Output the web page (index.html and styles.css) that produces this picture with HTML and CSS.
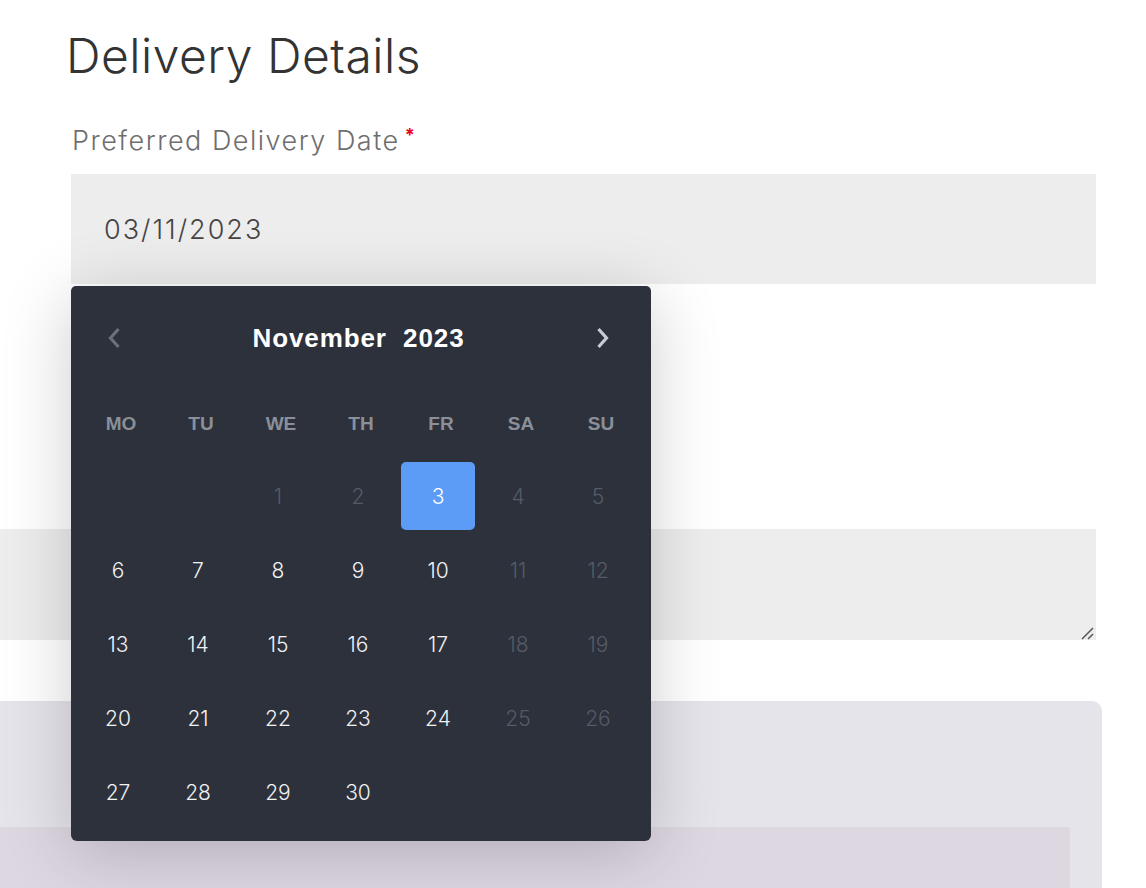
FILE: index.html
```html
<!DOCTYPE html>
<html>
<head>
<meta charset="utf-8">
<link rel="stylesheet" href="styles.css">
</head>
<body>
<div class="page">
  <div class="field-block">
    <h1 class="title">Delivery Details</h1>
    <label class="label">Preferred Delivery Date<span class="req">*</span></label>
    <div class="date-wrap">
      <div class="date-input">03/11/2023</div>
      <div class="calendar">
        <div class="cal-head">
          <span class="nav nav-prev"><svg width="14" height="24" viewBox="0 0 14 24"><path d="M11.5 3 L3.5 12 L11.5 21" fill="none" stroke="currentColor" stroke-width="3.2"/></svg></span>
          <span class="month">November&nbsp; 2023</span>
          <span class="nav nav-next"><svg width="14" height="24" viewBox="0 0 14 24"><path d="M2.5 3 L10.5 12 L2.5 21" fill="none" stroke="currentColor" stroke-width="3.2"/></svg></span>
        </div>
        <div class="weekdays">
          <span>MO</span><span>TU</span><span>WE</span><span>TH</span><span>FR</span><span>SA</span><span>SU</span>
        </div>
        <div class="days">
          <span class="day empty"></span><span class="day empty"></span>
          <span class="day off">1</span><span class="day off">2</span><span class="day sel">3</span><span class="day off">4</span><span class="day off">5</span>
          <span class="day">6</span><span class="day">7</span><span class="day">8</span><span class="day">9</span><span class="day">10</span><span class="day off">11</span><span class="day off">12</span>
          <span class="day">13</span><span class="day">14</span><span class="day">15</span><span class="day">16</span><span class="day">17</span><span class="day off">18</span><span class="day off">19</span>
          <span class="day">20</span><span class="day">21</span><span class="day">22</span><span class="day">23</span><span class="day">24</span><span class="day off">25</span><span class="day off">26</span>
          <span class="day">27</span><span class="day">28</span><span class="day">29</span><span class="day">30</span>
        </div>
      </div>
    </div>
  </div>
  <div class="textarea"><svg class="grip" width="14" height="14" viewBox="0 0 14 14"><path d="M2 13 L13 2 M8 13 L13 8" stroke="#555" stroke-width="1.5" fill="none"/></svg></div>
  <div class="card">
    <div class="card-inner"></div>
  </div>
</div>
</body>
</html>
```

FILE: styles.css
```css
* { box-sizing: border-box; }
html, body { margin: 0; padding: 0; background: #fff; }
body { font-family: Inter, "Liberation Sans", Arial, sans-serif; overflow: hidden; height: 888px; }
.page { width: 1146px; }
.field-block { padding-left: 71px; width: 1096px; }
.title {
  margin: 0;
  padding-top: 26px;
  font-family: Inter, "Liberation Sans", sans-serif;
  font-weight: 300;
  font-size: 48px;
  line-height: 60px;
  color: #333;
  margin-left: -5px;
  letter-spacing: 0.5px;
}
.label {
  display: block;
  margin-top: 40px;
  font-family: Inter, "Liberation Sans", sans-serif;
  font-weight: 300;
  font-size: 27px;
  line-height: 30px;
  color: #6e6e6e;
  margin-left: 1px;
  letter-spacing: 1.5px;
}
.req { color: #e8001c; font-size: 18px; vertical-align: top; margin-left: 5px; position: relative; top: -6px; font-weight: 700; letter-spacing: 0; }
.date-wrap { position: relative; margin-top: 18px; }
.date-input {
  height: 110px;
  background: #ededed;
  padding-left: 33px;
  display: flex;
  align-items: center;
  font-family: Inter, "Liberation Sans", sans-serif;
  font-weight: 300;
  font-size: 27px;
  color: #444;
  letter-spacing: 2px;
}
.calendar {
  position: absolute;
  left: 0;
  top: 112px;
  width: 580px;
  height: 555px;
  background: #2c313c;
  border-radius: 5px 5px 6px 6px;
  box-shadow: 0 12px 70px rgba(0, 0, 0, 0.2);
  padding: 0 10px;
  z-index: 5;
  letter-spacing: 0;
}
.cal-head {
  height: 104px;
  display: grid;
  grid-template-columns: 1fr auto 1fr;
  align-items: center;
  padding: 0 31px 0 26px;
}
.month {
  color: #fff;
  font-family: "Liberation Sans", Arial, sans-serif;
  font-weight: 700;
  font-size: 26px;
  letter-spacing: 0.9px;
}
.nav { display: flex; }
.nav-prev { color: #6b707b; justify-content: flex-start; }
.nav-next { color: #c7cbd3; justify-content: flex-end; }
.weekdays {
  display: grid;
  grid-template-columns: repeat(7, 80px);
  height: 68px;
  align-items: center;
}
.weekdays span {
  text-align: center;
  color: #8b8f98;
  font-family: "Liberation Sans", Arial, sans-serif;
  font-weight: 700;
  font-size: 19px;
}
.days {
  display: grid;
  grid-template-columns: repeat(7, 80px);
  grid-auto-rows: 68px;
  row-gap: 6px;
  margin-top: 4px;
}
.day {
  width: 74px;
  height: 68px;
  display: flex;
  align-items: center;
  justify-content: center;
  font-family: Inter, "Liberation Sans", Arial, sans-serif;
  font-weight: 300;
  font-size: 21px;
  color: #f2f2f4;
  border-radius: 5px;
}
.day.off { color: #555b66; }
.day.sel { background: #5d9cf6; color: #fff; }
.textarea {
  margin-top: 245px;
  width: 1096px;
  height: 111px;
  background: #ededed;
  position: relative;
}
.grip { position: absolute; right: 2px; bottom: 0; }
.card {
  margin-top: 61px;
  width: 1102px;
  height: 200px;
  background: #e6e4eb;
  border-top-right-radius: 10px;
  padding-top: 126px;
}
.card-inner {
  width: 1070px;
  height: 100px;
  background: #ddd7e2;
  border-top-right-radius: 4px;
}
```
